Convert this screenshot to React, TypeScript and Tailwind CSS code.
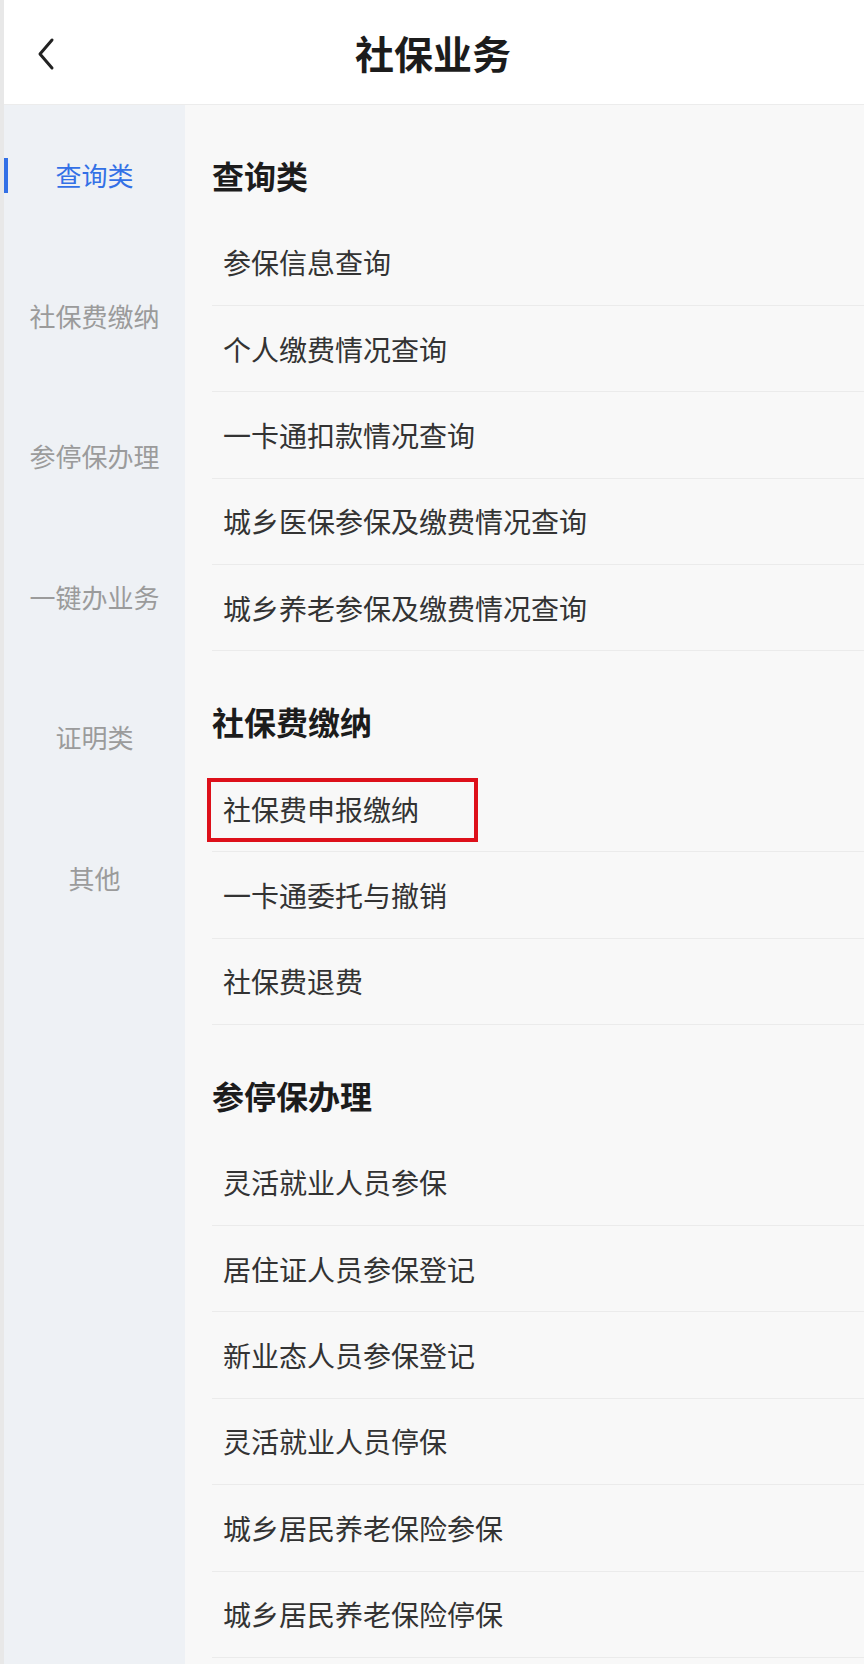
const sideTabs = ['查询类', '社保费缴纳', '参停保办理', '一键办业务', '证明类', '其他'];

const sections = [
  {
    title: '查询类',
    items: ['参保信息查询', '个人缴费情况查询', '一卡通扣款情况查询', '城乡医保参保及缴费情况查询', '城乡养老参保及缴费情况查询'],
  },
  {
    title: '社保费缴纳',
    items: ['社保费申报缴纳', '一卡通委托与撤销', '社保费退费'],
  },
  {
    title: '参停保办理',
    items: ['灵活就业人员参保', '居住证人员参保登记', '新业态人员参保登记', '灵活就业人员停保', '城乡居民养老保险参保', '城乡居民养老保险停保'],
  },
];

export default function App() {
  const active = 0;

  return (
    <div className="w-[864px] h-[1664px] overflow-hidden flex bg-[#f8f8f8] font-['Noto_Sans_CJK_SC','Noto_Sans',sans-serif]">
      {/* left edge strip */}
      <div className="w-[4px] shrink-0 bg-[#e8e8e8]" />

      <div className="flex-1 flex flex-col min-w-0">
        {/* Header */}
        <header className="h-[105px] shrink-0 bg-white border-b border-[#ececec] flex items-center relative">
          <button className="absolute left-[27px] top-[35px] w-[30px] h-[38px] flex items-center justify-center">
            <svg width="22" height="34" viewBox="0 0 22 34" fill="none">
              <path d="M17 3 L5 17 L17 31" stroke="#222" strokeWidth="3" strokeLinecap="round" strokeLinejoin="round" />
            </svg>
          </button>
          <h1 className="w-full text-center text-[39px] leading-[44px] font-bold text-[#1c1c1c] pr-[2px]">社保业务</h1>
        </header>

        <div className="flex-1 flex min-h-0">
          {/* Sidebar */}
          <nav className="w-[181px] shrink-0 bg-[#eef1f5] flex flex-col">
            {sideTabs.map((t, i) => (
              <div key={t} className="h-[140.5px] shrink-0 flex items-center justify-center relative">
                {i === active && <div className="absolute left-0 top-[53px] w-[4px] h-[35px] bg-[#3370e6]" />}
                <span className={`text-[26px] leading-[32px] ${i === active ? 'text-[#3370e6]' : 'text-[#9b9b9b]'}`}>{t}</span>
              </div>
            ))}
          </nav>

          {/* Content */}
          <main className="flex-1 pl-[27px] flex flex-col">
            {sections.map((s) => (
              <section key={s.title} className="shrink-0">
                <div className="h-[114.5px] pt-[52px]">
                  <h2 className="text-[32px] leading-[36px] font-bold text-[#1c1c1c]">{s.title}</h2>
                </div>
                {s.items.map((item) => (
                  <div key={item} className="h-[86.4px] border-b border-[#ebebeb] flex items-center pl-[11px] relative">
                    <span className="text-[28px] leading-[34px] text-[#333333]">{item}</span>
                    {item === '社保费申报缴纳' && (
                      <div className="absolute left-[-5px] top-[12px] w-[271px] h-[64px] border-[4px] border-[#dd101a]" />
                    )}
                  </div>
                ))}
              </section>
            ))}
          </main>
        </div>
      </div>
    </div>
  );
}
